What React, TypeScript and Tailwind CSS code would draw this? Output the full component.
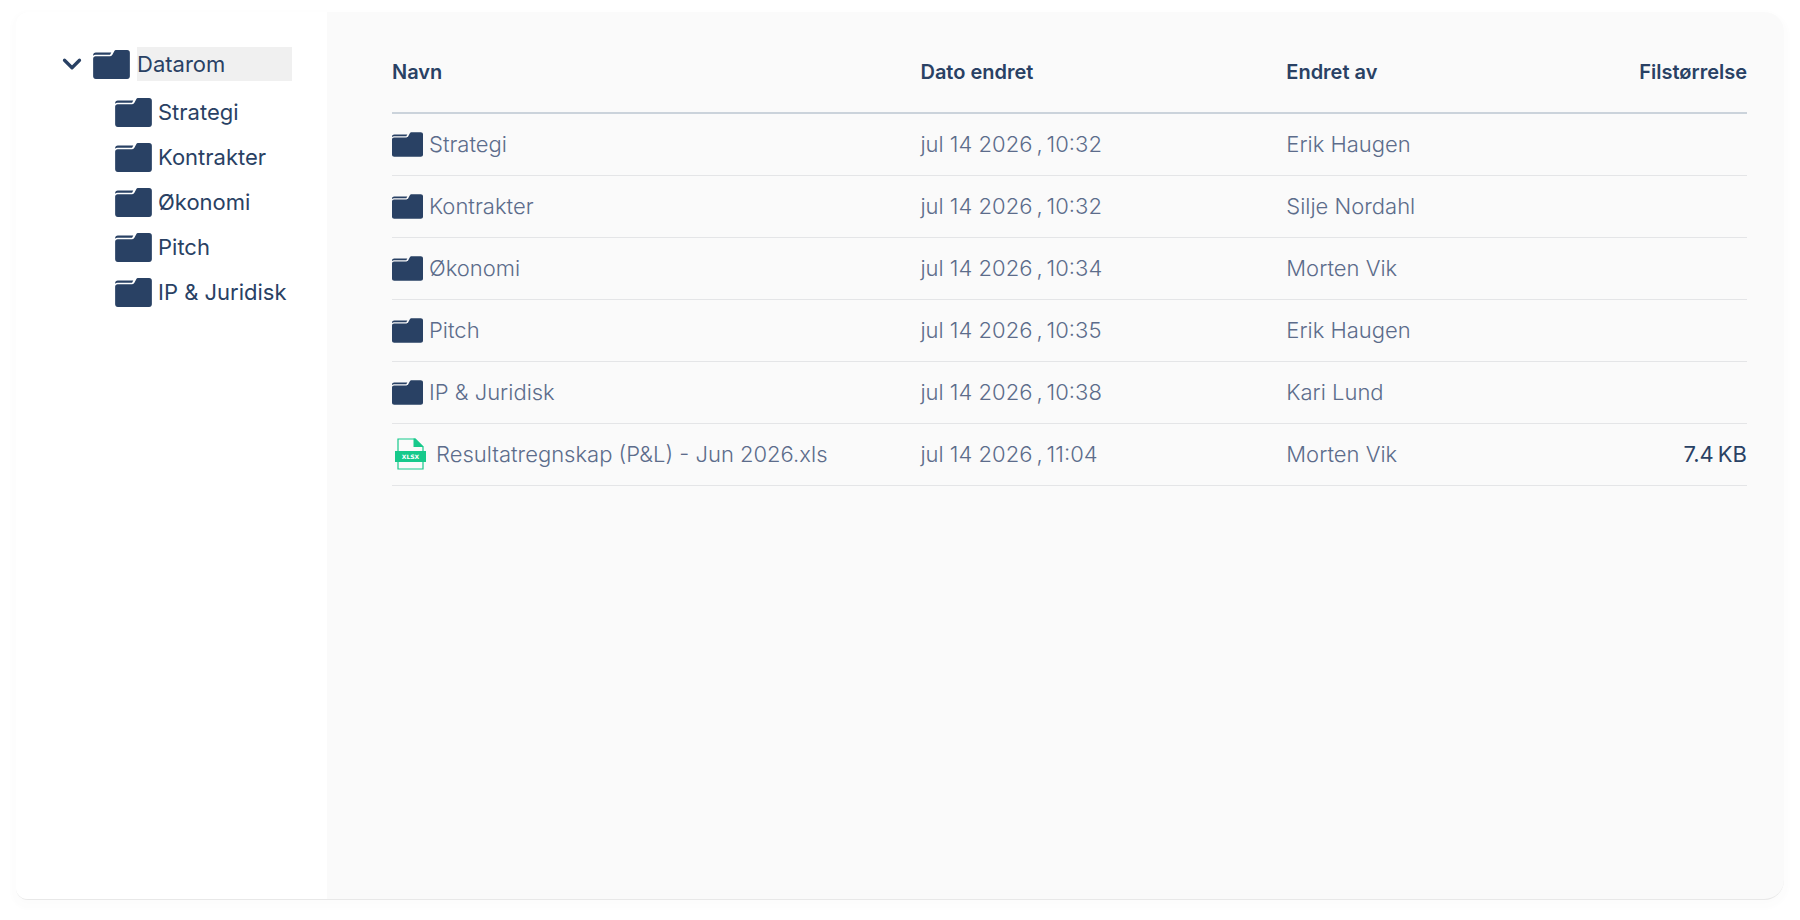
import { ChevronDown } from 'lucide-react'

const folders = ['Strategi', 'Kontrakter', 'Økonomi', 'Pitch', 'IP & Juridisk']

const rows = [
  { name: 'Strategi', type: 'folder', date: 'jul 14 2026', time: '10:32', by: 'Erik Haugen' },
  { name: 'Kontrakter', type: 'folder', date: 'jul 14 2026', time: '10:32', by: 'Silje Nordahl' },
  { name: 'Økonomi', type: 'folder', date: 'jul 14 2026', time: '10:34', by: 'Morten Vik' },
  { name: 'Pitch', type: 'folder', date: 'jul 14 2026', time: '10:35', by: 'Erik Haugen' },
  { name: 'IP & Juridisk', type: 'folder', date: 'jul 14 2026', time: '10:38', by: 'Kari Lund' },
  {
    name: 'Resultatregnskap (P&L) - Jun 2026.xls',
    type: 'xlsx',
    date: 'jul 14 2026',
    time: '11:04',
    by: 'Morten Vik',
    size: '7.4',
  },
]

function FolderIcon({ className }: { className: string }) {
  return (
    <svg viewBox="0 0 38 30" className={className} fill="currentColor" aria-hidden="true">
      <path d="M0 5.2C0 3.6 1.2 2.6 2.8 2.6H18.8L17.5 5H2.5C1.4 5 .6 5.3 0 6Z" />
      <path d="M2.6 6.4H17.6C18.8 6.4 19.4 6 19.9 5L21.7 1.6C22.2.5 23 0 24.2 0H35.2C36.9 0 38 1.1 38 2.8V27.2C38 28.9 36.9 30 35.2 30H2.8C1.1 30 0 28.9 0 27.2V9C0 7.4 1 6.4 2.6 6.4Z" />
    </svg>
  )
}

function XlsxIcon() {
  return (
    <svg viewBox="0 0 31 32" className="w-[31px] h-8 shrink-0" aria-hidden="true">
      <path d="M3 14V1H20L28 9V14M3 23V31H28V23" fill="none" stroke="#17c98b" strokeWidth="1.2" />
      <path d="M18.5.5H20.5L28.5 8.5V9H18.5Z" fill="#17c98b" />
      <rect y="13" width="31" height="11" fill="#17c98b" />
      <text
        x="15.5"
        y="21"
        textAnchor="middle"
        fontFamily="DejaVu Sans, sans-serif"
        fontSize="6"
        fontWeight="700"
        fill="#fff"
      >
        XLSX
      </text>
    </svg>
  )
}

export default function App() {
  return (
    <div className="min-h-screen flex bg-white px-4 pt-3 pb-5 font-['Inter',sans-serif] text-[#294164]">
      <div className="flex-1 flex overflow-hidden rounded-l-xl rounded-r-[20px] border-b border-[#e8e8e8] bg-[#fafafa] shadow-[0_4px_4px_5px_rgba(0,0,0,0.012)]">
        {/* Folder tree */}
        <nav aria-label="Mapper" className="w-[311px] shrink-0 bg-white pt-[35px] pl-[45px] pr-[35px]">
          <button type="button" aria-expanded="true" className="flex w-full items-center text-left">
            <ChevronDown className="size-[30px] shrink-0 -ml-1 mr-1.5" strokeWidth={2.6} />
            <FolderIcon className="w-[37px] h-[29px] shrink-0 mr-[7px]" />
            <span className="flex-1 bg-[#f0f0f0] text-[22px] leading-[34px]">Datarom</span>
          </button>
          <ul className="mt-[9px] pl-[54px]">
            {folders.map((name) => (
              <li key={name}>
                <button type="button" className="flex h-[45px] items-center gap-1.5 whitespace-nowrap text-[22px]">
                  <FolderIcon className="w-[37px] h-[29px] shrink-0" />
                  {name}
                </button>
              </li>
            ))}
          </ul>
        </nav>

        {/* File list */}
        <main className="flex-1 pl-[65px] pr-[37px] pt-5">
          <table className="w-full table-fixed border-collapse text-left">
            <thead>
              <tr className="h-[81px] border-b-2 border-[#cbd3db] text-xl">
                <th className="w-[39%] font-semibold">Navn</th>
                <th className="w-[27%] font-semibold">Dato endret</th>
                <th className="font-semibold">Endret av</th>
                <th className="text-right font-semibold">Filstørrelse</th>
              </tr>
            </thead>
            <tbody className="text-[22px] font-light text-[#5c6c8b]">
              {rows.map((row) => (
                <tr key={row.name} className="h-[62px] border-b border-[#e4e5e7]">
                  <td>
                    {row.type === 'folder' ? (
                      <div className="flex items-center gap-1.5">
                        <FolderIcon className="w-[31px] h-[25px] shrink-0 text-[#294164]" />
                        {row.name}
                      </div>
                    ) : (
                      <div className="flex items-center gap-2.5 pl-[3px]">
                        <XlsxIcon />
                        {row.name}
                      </div>
                    )}
                  </td>
                  <td>
                    <div className="flex gap-1">
                      <span>{row.date}</span>
                      <span>,</span>
                      <span>{row.time}</span>
                    </div>
                  </td>
                  <td>{row.by}</td>
                  <td className="font-normal text-[#294164]">
                    {row.size && (
                      <div className="flex justify-end gap-1">
                        <span>{row.size}</span>
                        <span>KB</span>
                      </div>
                    )}
                  </td>
                </tr>
              ))}
            </tbody>
          </table>
        </main>
      </div>
    </div>
  )
}
